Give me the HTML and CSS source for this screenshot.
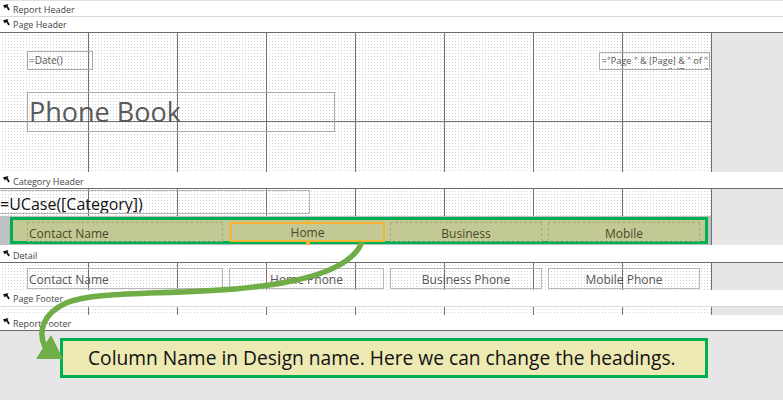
FILE: index.html
```html
<!DOCTYPE html>
<html>
<head>
<meta charset="utf-8">
<link rel="stylesheet" href="styles.css">
</head>
<body>
<div class="report">
  <div class="bar bar-first bar-light"><svg class="sel" width="7" height="7" viewBox="0 0 7 7"><path d="M0 1.2 L5.5 0 L4.6 1.8 L6.8 5.6 L5.4 6.6 L3.2 2.9 L1.8 4.4 Z" fill="#111"/></svg><span>Report Header</span></div>
  <div class="bar bar-dark"><svg class="sel" width="7" height="7" viewBox="0 0 7 7"><path d="M0 1.2 L5.5 0 L4.6 1.8 L6.8 5.6 L5.4 6.6 L3.2 2.9 L1.8 4.4 Z" fill="#111"/></svg><span>Page Header</span></div>
  <div class="body body-page">
    <div class="canvas canvas-page">
      <div class="ctl ctl-date">=Date()</div>
      <div class="ctl ctl-pages">="Page " &amp; [Page] &amp; " of " &amp; [Pages]</div>
      <div class="ctl ctl-title">Phone Book</div>
    </div>
    <div class="gutter"></div>
  </div>
  <div class="bar bar-dark bar-cat"><svg class="sel" width="7" height="7" viewBox="0 0 7 7"><path d="M0 1.2 L5.5 0 L4.6 1.8 L6.8 5.6 L5.4 6.6 L3.2 2.9 L1.8 4.4 Z" fill="#111"/></svg><span>Category Header</span></div>
  <div class="body body-cat">
    <div class="canvas canvas-cat">
      <div class="ctl ctl-ucase">=UCase([Category])</div>
      <div class="band"></div>
      <div class="green-box"></div>
      <div class="ctl hdr hdr-left" style="left:27px;width:196px">Contact Name</div>
      <div class="ctl hdr hdr-sel" style="left:230px;width:155px">Home<i class="handle handle-top"></i><i class="handle handle-bottom"></i></div>
      <div class="ctl hdr" style="left:390px;width:152px">Business</div>
      <div class="ctl hdr" style="left:548px;width:152px">Mobile</div>
    </div>
    <div class="gutter"></div>
  </div>
  <div class="bar bar-dark bar-detail"><svg class="sel" width="7" height="7" viewBox="0 0 7 7"><path d="M0 1.2 L5.5 0 L4.6 1.8 L6.8 5.6 L5.4 6.6 L3.2 2.9 L1.8 4.4 Z" fill="#111"/></svg><span>Detail</span></div>
  <div class="body body-detail">
    <div class="canvas">
      <div class="ctl fld fld-left" style="left:27px;width:196px">Contact Name</div>
      <div class="ctl fld" style="left:229px;width:155px">Home Phone</div>
      <div class="ctl fld" style="left:390px;width:152px">Business Phone</div>
      <div class="ctl fld" style="left:548px;width:152px">Mobile Phone</div>
    </div>
    <div class="gutter"></div>
  </div>
  <div class="bar bar-light bar-pf"><svg class="sel" width="7" height="7" viewBox="0 0 7 7"><path d="M0 1.2 L5.5 0 L4.6 1.8 L6.8 5.6 L5.4 6.6 L3.2 2.9 L1.8 4.4 Z" fill="#111"/></svg><span>Page Footer</span></div>
  <div class="body body-pf">
    <div class="canvas"></div>
    <div class="gutter"></div>
  </div>
  <div class="bar bar-dark bar-rf"><svg class="sel" width="7" height="7" viewBox="0 0 7 7"><path d="M0 1.2 L5.5 0 L4.6 1.8 L6.8 5.6 L5.4 6.6 L3.2 2.9 L1.8 4.4 Z" fill="#111"/></svg><span>Report Footer</span></div>
</div>
<div class="workspace">
  <div class="callout">Column Name in Design name. Here we can change the headings.</div>
</div>
<svg class="arrow" width="783" height="400" viewBox="0 0 783 400">
  <path d="M362 242 C 352 268 305 283 235 289 C 160 295 95 291 66 303 C 42 314 38 332 45 347" fill="none" stroke="#70ad47" stroke-width="5.5" stroke-linecap="butt"/>
  <polygon points="51,335 36,359 63,359" fill="#70ad47"/>
</svg>
</body>
</html>
```
FILE: styles.css
```css
* { box-sizing: border-box; }
html, body { margin: 0; padding: 0; }
body {
  width: 783px;
  height: 400px;
  overflow: hidden;
  background: #e6e6e6;
  font-family: "Open Sans", "Noto Sans", sans-serif;
  position: relative;
}
.report { display: flex; flex-direction: column; background: #fff; }

.bar {
  display: flex;
  align-items: center;
  gap: 2px;
  padding-left: 3px;
  background: #fff;
  font-size: 9px;
  color: #444;
  height: 16px;
  border-bottom: 1px solid #d9d9d9;
}
.bar-first { height: 17px; border-top: 1px solid #e0e0e0; padding-top: 1px; }
.bar-dark { border-bottom-color: #6a6a6a; }
.bar-cat { height: 17px; padding-top: 2px; }
.bar-detail { height: 18px; padding-top: 4px; }
.bar-pf { height: 17px; padding-top: 1px; }
.bar-rf { height: 16px; padding-top: 2px; border-bottom-width: 1px; }
.sel { flex: none; margin-top: -4px; margin-right: 1px; }

.body { display: flex; }
.body-page { height: 139px; }
.body-cat { height: 56px; }
.body-detail { height: 27px; }
.body-pf { height: 8px; }

.canvas {
  position: relative;
  width: 712px;
  flex: none;
  background-color: #fff;
  background-image:
    linear-gradient(to right, transparent 88px, #727272 88px),
    linear-gradient(to right, #fff 2px, transparent 2px),
    linear-gradient(#fff 2px, #d3d3d3 2px);
  background-size: 89px 100%, 3px 3px, 3px 3px;
  background-repeat: repeat-x, repeat, repeat;
}
.canvas-page {
  background-image:
    linear-gradient(transparent 88px, #727272 88px, #727272 89px, transparent 89px),
    linear-gradient(to right, transparent 88px, #727272 88px),
    linear-gradient(to right, #fff 2px, transparent 2px),
    linear-gradient(#fff 2px, #d3d3d3 2px);
  background-size: 100% 100%, 89px 100%, 3px 3px, 3px 3px;
  background-repeat: no-repeat, repeat-x, repeat, repeat;
}
.gutter { flex: 1; background: #e6e6e6; }

.ctl {
  position: absolute;
  border: 1px solid #a9a9a9;
  color: #575757;
  white-space: nowrap;
  overflow: hidden;
}
.ctl-date { left: 27px; top: 18px; width: 66px; height: 19px; font-size: 10px; line-height: 16px; padding-left: 1px; }
.ctl-pages {
  left: 599px; top: 19px; width: 111px; height: 18px;
  font-size: 9.2px; line-height: 11px; padding-top: 2px;
  white-space: normal; text-align: right; padding-right: 1px;
}
.ctl-title { left: 27px; top: 59px; width: 308px; height: 40px; font-size: 27px; line-height: 38px; padding-left: 1px; color: #5a5a5a; }

.ctl-ucase {
  left: -1px; top: 1px; width: 311px; height: 24px;
  border-color: #b5b5b5;
  font-size: 16px; line-height: 22px; padding-top: 2px; color: #111;
}
.band { position: absolute; left: 0; top: 27px; width: 711px; height: 29px; background: #bdc1c4; }
.green-box {
  position: absolute; left: 10px; top: 28px; width: 698px; height: 27px;
  border: 3px solid #00b050; background: #c3c995;
}
.hdr {
  top: 33px; height: 20px;
  border: 1px dashed #a6a77b;
  font-size: 12px; line-height: 18px; padding-top: 2px; text-align: center;
  color: #4a4628;
}
.hdr-left { text-align: left; padding-left: 1px; }
.hdr-sel { border: 2px solid #f6b436; line-height: 16px; padding-top: 1px; overflow: visible; }
.handle { position: absolute; left: 74px; width: 4px; height: 4px; background: #f6b436; }
.handle-top { top: -4px; }
.handle-bottom { bottom: -5px; }

.fld {
  top: 5px; height: 21px;
  border-color: #b6b6b6;
  font-size: 12px; line-height: 19px; padding-top: 1px; text-align: center;
  color: #555;
}
.fld-left { text-align: left; padding-left: 1px; }

.workspace { padding: 7px 0 0 60px; }
.callout {
  width: 648px; height: 40px;
  border: 3px solid #00b050;
  background: #ede9b3;
  color: #111;
  font-size: 19.2px;
  line-height: 34px;
  padding-left: 25px;
  white-space: nowrap;
}
.arrow { position: absolute; left: 0; top: 0; pointer-events: none; }
```
